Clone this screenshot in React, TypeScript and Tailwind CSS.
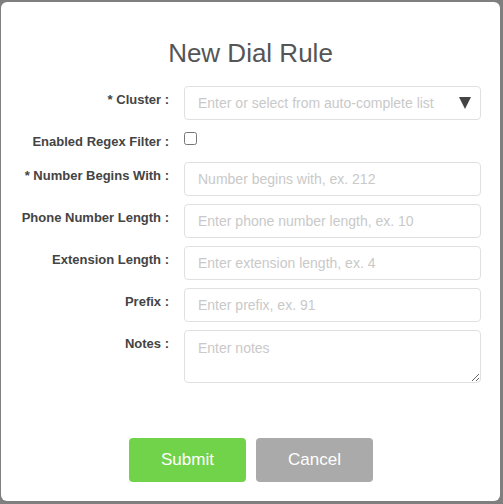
import React from 'react';

const font = { fontFamily: '"Liberation Sans", Arial, sans-serif' };

function Field({ label, children }: { label: string; children: React.ReactNode }) {
  return (
    <div className="flex">
      <label className="w-[168px] shrink-0 pt-[6px] text-right text-[13px] leading-[15px] font-bold text-[#444]">
        {label}
      </label>
      <div className="ml-[15px] w-[297px]">{children}</div>
    </div>
  );
}

const inputCls =
  'w-full h-[34px] px-[13px] text-[14px] text-[#444] bg-white border border-[#e0e0e0] rounded-[4px] outline-none placeholder:text-[#c9c9c9]';

export default function App() {
  return (
    <div className="w-[503px] h-[504px] bg-[#7f7f7f] pt-[2px] pl-[1px]" style={font}>
      <div className="w-[499px] h-[499px] bg-white rounded-[6px] pt-[36px]">
        <h2 className="text-center text-[26px] leading-[30px] text-[#555]">New Dial Rule</h2>

        <form className="mt-[18px] flex flex-col gap-2">
          <Field label="* Cluster :">
            <div className="relative">
              <input className={inputCls} placeholder="Enter or select from auto-complete list" />
              <svg className="absolute right-[10px] top-[11px]" width="12" height="12" viewBox="0 0 12 12">
                <polygon points="0,0 12,0 6,12" fill="#444" />
              </svg>
            </div>
          </Field>

          <div className="flex h-[26px]">
            <label className="w-[168px] shrink-0 pt-[6px] text-right text-[13px] leading-[15px] font-bold text-[#444]">
              Enabled Regex Filter :
            </label>
            <input type="checkbox" className="ml-[15px] mt-[4px] w-[13px] h-[13px] m-0" />
          </div>

          <Field label="* Number Begins With :">
            <input className={inputCls} placeholder="Number begins with, ex. 212" />
          </Field>
          <Field label="Phone Number Length :">
            <input className={inputCls} placeholder="Enter phone number length, ex. 10" />
          </Field>
          <Field label="Extension Length :">
            <input className={inputCls} placeholder="Enter extension length, ex. 4" />
          </Field>
          <Field label="Prefix :">
            <input className={inputCls} placeholder="Enter prefix, ex. 91" />
          </Field>
          <Field label="Notes :">
            <textarea
              className="block w-full h-[53px] px-[13px] pt-[9px] text-[14px] leading-[16px] text-[#444] bg-white border border-[#e0e0e0] rounded-[4px] outline-none placeholder:text-[#c9c9c9]"
              placeholder="Enter notes"
            />
          </Field>

          <div className="mt-[47px] flex justify-center gap-[10px] pl-[1px]">
            <button
              type="button"
              className="w-[117px] h-[44px] rounded-[4px] bg-[#71d34a] text-white text-[17px]"
            >
              Submit
            </button>
            <button
              type="button"
              className="w-[117px] h-[44px] rounded-[4px] bg-[#aaaaaa] text-white text-[17px]"
            >
              Cancel
            </button>
          </div>
        </form>
      </div>
    </div>
  );
}
